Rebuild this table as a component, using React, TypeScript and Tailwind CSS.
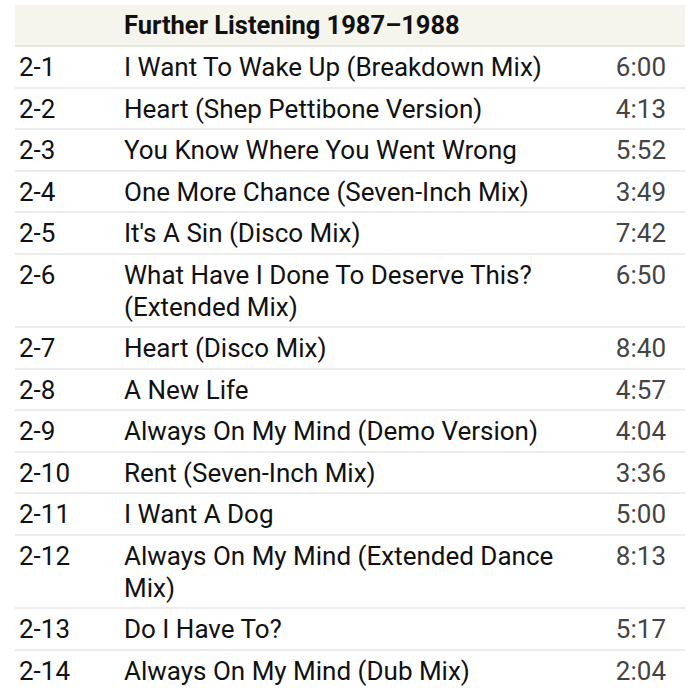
import React from "react";

const tracks: [string, string, string][] = [
  ["2-1", "I Want To Wake Up (Breakdown Mix)", "6:00"],
  ["2-2", "Heart (Shep Pettibone Version)", "4:13"],
  ["2-3", "You Know Where You Went Wrong", "5:52"],
  ["2-4", "One More Chance (Seven-Inch Mix)", "3:49"],
  ["2-5", "It's A Sin (Disco Mix)", "7:42"],
  ["2-6", "What Have I Done To Deserve This? (Extended Mix)", "6:50"],
  ["2-7", "Heart (Disco Mix)", "8:40"],
  ["2-8", "A New Life", "4:57"],
  ["2-9", "Always On My Mind (Demo Version)", "4:04"],
  ["2-10", "Rent (Seven-Inch Mix)", "3:36"],
  ["2-11", "I Want A Dog", "5:00"],
  ["2-12", "Always On My Mind (Extended Dance Mix)", "8:13"],
  ["2-13", "Do I Have To?", "5:17"],
  ["2-14", "Always On My Mind (Dub Mix)", "2:04"],
];

export default function App() {
  return (
    <div className="w-[700px] h-[694px] bg-white overflow-hidden pt-[5px] px-[15px]" style={{ fontFamily: "Roboto, sans-serif" }}>
      <div className="flex bg-[#f5f4ed] border-b-2 border-[#e6e5de] h-[42px] items-center">
        <div className="w-[109px]" />
        <div className="text-[25.5px] font-bold text-[#111]">Further Listening 1987–1988</div>
      </div>
      {tracks.map(([n, t, d]) => (
        <div key={n} className="flex border-b-2 border-[#ececec] last:border-b-0 pt-[4px] pb-[3.5px] text-[26px] leading-[32px]">
          <div className="w-[109px] pl-[4px] text-[#111]">{n}</div>
          <div className="w-[450px] text-[#111]">{t}</div>
          <div className="flex-1 text-right pr-[19px] text-[#444]">{d}</div>
        </div>
      ))}
    </div>
  );
}
